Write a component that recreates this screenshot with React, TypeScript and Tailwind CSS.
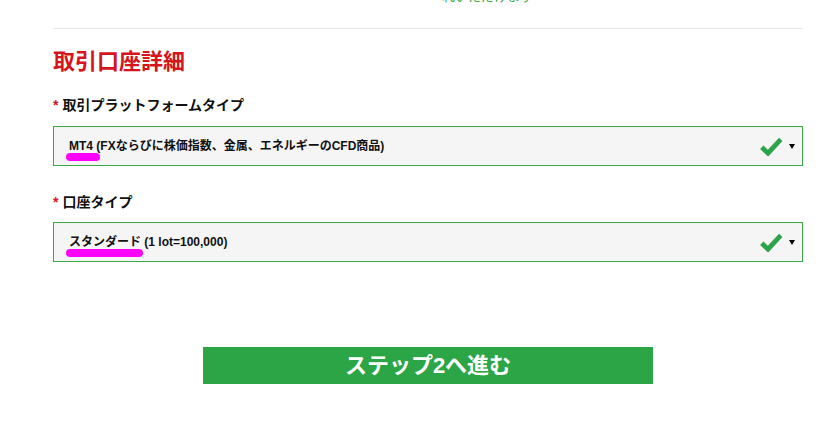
import React from "react";

const jp = "font-['Liberation_Sans','Noto_Sans_CJK_JP',sans-serif]";

const Check = () => (
  <svg width="22" height="19" viewBox="0 0 22 19" className="block">
    <path d="M1.8 10.3 L8 16.2 L20.8 2.3" fill="none" stroke="#2ca348" strokeWidth="4.8" strokeLinejoin="miter" />
  </svg>
);

const SelectBox = ({ children, markW }: { children: React.ReactNode; markW: number }) => (
  <div className="relative h-[40px] border border-[#3aa845] bg-[#f5f5f5] flex items-center pl-[15px] pr-[7px]">
    <div className={`flex-1 text-[12px] font-bold text-[#111] ${jp}`}>{children}</div>
    <div className="flex items-center gap-[7px]">
      <Check />
      <div className="w-0 h-0 border-l-[3px] border-r-[3px] border-t-[5px] border-l-transparent border-r-transparent border-t-black" />
    </div>
    <div
      className="absolute left-[12px] top-[26px] h-[8px] rounded-full bg-[#ff00ff]"
      style={{ width: markW }}
    />
  </div>
);

export default function App() {
  return (
    <div className={`w-[824px] h-[422px] bg-white overflow-hidden ${jp}`}>
      <div className="h-[28px] relative overflow-hidden">
        <div className="absolute left-[442px] top-[-11px] text-[13px] leading-[16px] text-[#3aa845]">
          れいただけます
        </div>
      </div>
      <div className="ml-[53px] w-[750px]">
        <div className="h-px bg-[#e8e8e8]" />
        <h2 className="mt-[19px] text-[22px] leading-[28px] font-bold text-[#d5141c]">取引口座詳細</h2>
        <div className="mt-[19px] leading-[20px] text-[14px] font-semibold text-[#111] flex items-center">
          <span className="text-[#d5141c] mr-[4px]">*</span>
          取引プラットフォームタイプ
        </div>
        <div className="mt-[11px]">
          <SelectBox markW={34}>MT4 (FXならびに株価指数、金属、エネルギーのCFD商品)</SelectBox>
        </div>
        <div className="mt-[26px] leading-[20px] text-[14px] font-semibold text-[#111] flex items-center">
          <span className="text-[#d5141c] mr-[4px]">*</span>
          口座タイプ
        </div>
        <div className="mt-[10px]">
          <SelectBox markW={77}>スタンダード (1 lot=100,000)</SelectBox>
        </div>
        <div className="mt-[85px] ml-[150px] w-[450px] h-[37px] bg-[#2ba545] flex items-center justify-center text-white text-[22px] font-bold">
          ステップ2へ進む
        </div>
      </div>
    </div>
  );
}
